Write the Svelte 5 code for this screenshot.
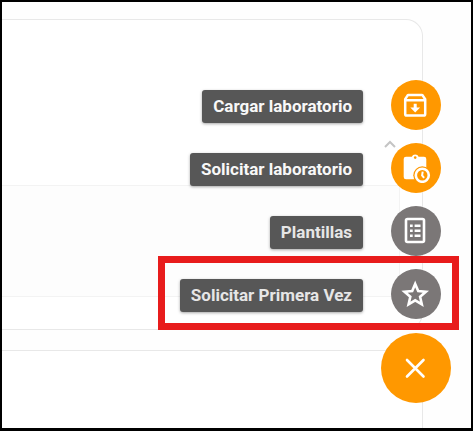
<script>
  let open = $state(true);

  const actions = [
    { id: 'upload', label: 'Cargar laboratorio', tone: 'orange' },
    { id: 'request', label: 'Solicitar laboratorio', tone: 'orange' },
    { id: 'templates', label: 'Plantillas', tone: 'gray' },
    { id: 'first', label: 'Solicitar Primera Vez', tone: 'gray', highlighted: true }
  ];
</script>

{#snippet icon(id)}
  <svg class="icon" viewBox="0 0 30 30" aria-hidden="true">
    {#if id === 'upload'}
      <path
        d="M4.2 9.2V24a1.6 1.6 0 0 0 1.6 1.6h16.8a1.6 1.6 0 0 0 1.6-1.6V9.2L21.8 5.6a1.2 1.2 0 0 0-1-.5H7.500a1.200 1.200 0 0 0-1 .5ZM4.200 10.300h20"
        fill="none" stroke="currentColor" stroke-width="2.5" stroke-linejoin="round"
      />
      <path d="M12.700 13.800h3v3.800h3.400l-4.900 5-4.900-5h3.400Z" fill="currentColor" />
    {:else if id === 'request'}
      <path
        d="M5 3.8h5.800a3.600 3.600 0 0 1 6.800 0H23a2.300 2.300 0 0 1 2.300 2.300V24a2.300 2.300 0 0 1-2.300 2.300H5A2.300 2.300 0 0 1 2.700 24V6.100A2.300 2.300 0 0 1 5 3.800Z"
        fill="currentColor"
      />
      <circle class="cutout" cx="14.2" cy="4.6" r="1.3" />
      <circle class="cutout" cx="21.3" cy="22.3" r="9" />
      <circle cx="21.3" cy="22.3" r="6.5" fill="none" stroke="currentColor" stroke-width="2.6" />
      <path d="M21.7 18.6l-.6 3.9 2 2.4" fill="none" stroke="currentColor" stroke-width="2" />
    {:else if id === 'templates'}
      <rect x="5" y="3" width="18" height="23" rx="1.5" fill="none" stroke="currentColor" stroke-width="2.6" />
      <path
        d="M9 8.400h2.700V11H9zM13.600 8.400h5.900V11h-5.900zM9 13.400h2.700V16H9zM13.600 13.400h5.900V16h-5.900zM9 18.400h2.700V21H9zM13.600 18.400h5.900V21h-5.900z"
        fill="currentColor"
      />
    {:else if id === 'first'}
      <path
        d="M14.2 4.9l3 7.100 7.700.7-5.800 5.100 1.700 7.500-6.600-4-6.600 4 1.700-7.500-5.800-5.100 7.700-.7Z"
        fill="none" stroke="currentColor" stroke-width="2.6"
      />
    {:else}
      <path
        d="M6 7l16.5 16.5M22.5 7L6 23.5"
        fill="none" stroke="currentColor" stroke-width="2.6" stroke-linecap="round"
      />
    {/if}
  </svg>
{/snippet}

<div class="page">
  <section class="card main-card">
    <div class="card-head">
      <button class="collapse" aria-label="Contraer">
        <svg viewBox="0 0 12 8" aria-hidden="true">
          <path d="M1 7l5-5 5 5" fill="none" stroke="currentColor" stroke-width="2" />
        </svg>
      </button>
    </div>
    <div class="panel"></div>
  </section>
  <section class="card next-card"></section>

  <nav class="speed-dial">
    {#if open}
      {#each actions as action (action.id)}
        <div class="action" class:highlighted={action.highlighted}>
          <label for={action.id} class:dim={action.tone === 'gray'}>{action.label}</label>
          <button id={action.id} class="round {action.tone}">
            {@render icon(action.id)}
          </button>
        </div>
      {/each}
    {/if}
    <button class="round orange toggle" aria-label="Cerrar" onclick={() => (open = !open)}>
      {@render icon('close')}
    </button>
  </nav>
</div>

<style>
  :global(body) {
    margin: 0;
  }

  .page {
    position: relative;
    box-sizing: border-box;
    min-height: 100vh;
    display: flex;
    flex-direction: column;
    gap: 20px;
    padding: 17px 48px 0 0;
    border: 2px solid #000;
    border-bottom-width: 3px;
    background: #fefefe;
    overflow: hidden;
    font-family: Roboto, sans-serif;
  }

  .card {
    border: 1px solid #e8e8e8;
    border-left: 0;
    background: #fff;
  }

  .main-card {
    border-radius: 0 17px 17px 0;
    padding: 0 22px 32px 0;
  }

  .next-card {
    flex: 1;
    border-bottom: 0;
    border-radius: 0 17px 0 0;
  }

  .card-head {
    display: flex;
    justify-content: flex-end;
    align-items: flex-end;
    height: 128px;
    padding: 0 4px 37px 0;
  }

  .collapse {
    display: flex;
    padding: 0;
    border: 0;
    background: none;
    color: #c4c4c4;
  }

  .collapse svg {
    width: 12px;
    height: 8px;
  }

  .panel {
    height: 110px;
    border: 1px solid #f3f3f3;
    border-left: 0;
    background: #fdfdfd;
  }

  /* Floats over the cards, anchored to the bottom right corner */
  .speed-dial {
    position: absolute;
    right: 20px;
    bottom: 25px;
    display: flex;
    flex-direction: column;
    align-items: flex-end;
    gap: 13px;
  }

  .action {
    position: relative;
    display: flex;
    align-items: center;
    gap: 28px;
    padding-right: 10px;
  }

  .action label {
    margin-top: 3px;
    padding: 0 11px;
    border-radius: 3px;
    background: #575757;
    box-shadow: 0 1px 3px rgba(0, 0, 0, 0.35);
    color: #f8f8f8;
    font-size: 17px;
    font-weight: 700;
    line-height: 33px;
    white-space: nowrap;
  }

  .action .dim {
    color: #e6e6e6;
  }

  .highlighted::after {
    content: '';
    position: absolute;
    inset: -13px -8px -11px -22px;
    border: 7px solid #e81c1c;
    pointer-events: none;
  }

  .round {
    display: flex;
    align-items: center;
    justify-content: center;
    width: 50px;
    height: 50px;
    padding: 0;
    border: 0;
    border-radius: 50%;
    color: #fff;
    cursor: pointer;
  }

  .orange {
    background: #ff9800;
  }

  .gray {
    background: #7b7777;
  }

  .toggle {
    width: 70px;
    height: 70px;
    margin-top: 1px;
  }

  .icon {
    width: 30px;
    height: 30px;
  }

  .cutout {
    fill: #ff9800;
  }
</style>
